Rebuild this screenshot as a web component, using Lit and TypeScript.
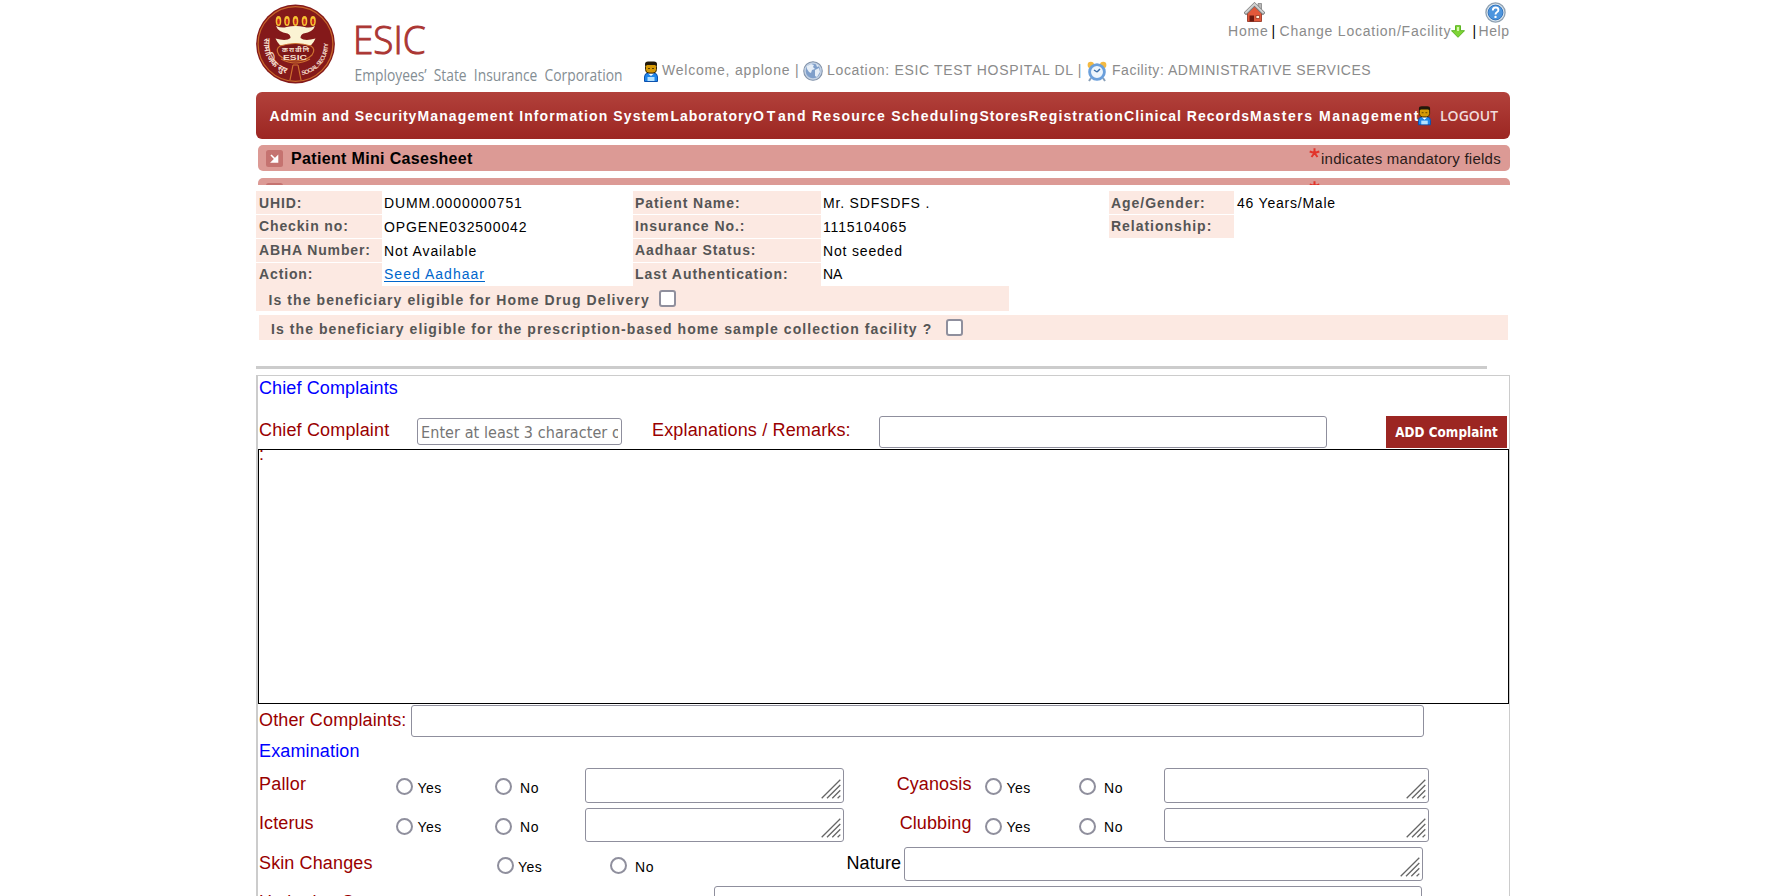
import { LitElement, html, svg, css } from "lit";
import { customElement } from "lit/decorators.js";

/* Text run with its own tracking, in pixels. */
const run = (text: string, tracking: number, cls = "") =>
  html`<span class="run ${cls}" style="letter-spacing:${tracking}px">${text}</span>`;

/* Menu entries: width in pixels, then text pieces with their tracking. */
const MENU: [number, [string, number][]][] = [
  [148, [["Admin and Security", 0.9]]],
  [253, [["Management Information System", 1.11]]],
  [82.5, [["Laboratory", 0.94]]],
  [226.5, [["OT", 2.8], ["and Resource Scheduling", 1.28]]],
  [49, [["Stores", 0.9]]],
  [95.5, [["Registration", 1.15]]],
  [126, [["Clinical Records", 1.02]]],
  [168, [["Masters Management", 1.53]]],
];

const PATIENT: [string, string, string, string, string?, string?][] = [
  ["UHID:", "DUMM.0000000751", "Patient Name:", "Mr. SDFSDFS .", "Age/Gender:", "46 Years/Male"],
  ["Checkin no:", "OPGENE032500042", "Insurance No.:", "1115104065", "Relationship:", ""],
  ["ABHA Number:", "Not Available", "Aadhaar Status:", "Not seeded"],
  ["Action:", "Seed Aadhaar", "Last Authentication:", "NA"],
];

const userIcon = () => html`<svg class="user" width="14" height="21" viewBox="0 0 14 21">
  <path d="M.5 20.500V16Q.5 12 4.500 12h5q4 0 4 4v4.500z" fill="#1f86ea" stroke="#0b50ad"/>
  <path d="M4 12.500l3 2.500 3-2.500" fill="#fff"/>
  <path d="M3.500 16h7v4h-7z" fill="#b4e2ff"/>
  <rect x="1.500" y="2" width="11" height="10" rx="3.500" fill="#d79a08" stroke="#3b2a06"/>
  <path d="M1 5V3Q1 .500 4 .500h6q3 0 3 2.500v2l-2-1H3z" fill="#21180a"/>
  <path d="M4 7.500h2M8 7.500h2" stroke="#5b4004"/></svg>`;

const globeIcon = () => html`<svg class="globe" width="20" height="20" viewBox="0 0 20 20">
  <circle cx="10" cy="10" r="9.200" fill="#7f9fca" stroke="#8493a8" stroke-width="1.200"/>
  <circle cx="10" cy="10" r="8" fill="none" stroke="#c4d2e4" stroke-width="1.400"/>
  <path d="M4 5l4-2 3 1-1 2 2 2-3 1-1 3-2-1-2-3zM12 9l4-2 1 4-3 5-2-1zM13 3l3 2-2 1z" fill="#e6eef7"/></svg>`;

const clockIcon = () => html`<svg class="clock" width="20" height="21" viewBox="0 0 20 21">
  <circle cx="3.800" cy="4" r="3.200" fill="#f3b942"/><circle cx="16.200" cy="4" r="3.200" fill="#f3b942"/>
  <path d="M4 17l-2 3M16 17l2 3" stroke="#8aa0b8" stroke-width="2"/>
  <circle cx="10" cy="11" r="7.400" fill="#edf5fc" stroke="#6a9fdb" stroke-width="2.800"/>
  <path d="M10 11l3-3M10 11l-3-2" stroke="#3b6ea8" stroke-width="1.500"/></svg>`;

const homeIcon = () => html`<svg class="home" width="21" height="21" viewBox="0 0 21 21">
  <path d="M14 1.500h3.500v6H14z" fill="#b9b9b9" stroke="#777" stroke-width=".7"/>
  <path d="M3.500 10l7-6.500 7 6.500v9.500h-14z" fill="#e2583a" stroke="#8e2b18" stroke-width=".8"/>
  <path d="M.8 12L10.500 2.500l9.700 9.500" fill="none" stroke="#777" stroke-width="3.600"/>
  <path d="M1.300 11.200L10.500 2.200l9.200 9" fill="none" stroke="#d0d0d0" stroke-width="2"/>
  <path d="M5.500 13.500H10v6H5.500z" fill="#6b1a10"/><path d="M12 13.500h3.500v3H12z" fill="#fff0d8" stroke="#8e2b18" stroke-width=".7"/></svg>`;

const helpIcon = () => html`<svg class="help" width="21" height="21" viewBox="0 0 21 21">
  <circle cx="10.500" cy="10.500" r="9.600" fill="#dce6ee" stroke="#8fa1b2" stroke-width="1.300"/>
  <circle cx="10.500" cy="10.500" r="7.400" fill="#4d95de" stroke="#3375be"/>
  <path d="M7.800 8.500q0-3 2.800-3t2.800 2.400q0 1.500-1.500 2.300-1.400.8-1.400 2.300" fill="none" stroke="#fff" stroke-width="1.900"/>
  <circle cx="10.500" cy="14.900" r="1.200" fill="#fff"/></svg>`;

const downIcon = () => html`<svg class="down" width="14" height="13" viewBox="0 0 14 13">
  <path d="M4.500.700h5v5h4L7 12.300.500 5.700h4z" fill="#7fd436" stroke="#5cb524"/><path d="M6 2h2v4H6z" fill="#d5f7ab"/></svg>`;

const brand = () => html`<svg class="brand" width="380" height="90" viewBox="0 0 380 90">
  <circle cx="39.500" cy="44" r="39.400" fill="#84191a"/>
  <circle cx="39.500" cy="44" r="37.400" fill="none" stroke="#c8672a" stroke-width="1.200"/>
  ${[22.5, 31, 39.5, 48.5, 57].map((x) => svg`<ellipse cx=${x} cy="21" rx="2.800" ry="5" fill="#f6c232"/><ellipse cx=${x} cy="21.500" rx="1.300" ry="3" fill="#c9281c"/>`)}
  <path d="M20 26q6 2.500 10.500 1 9-2 18 0 5 1.500 10.500-1-2 6-11.500 7.500-3 1-3 4.500 4 3.500 15 .500-4 9-10 9h-20q-6 0-10-9 11 3 15-.500 0-3.500-3-4.500Q22 32 20 26z" fill="#fbf3d3"/>
  <path d="M24 46q15.500-5 31 0 5 3 1 9-6 6-16.500 6T23 55q-4-6 1-9z" fill="#7d1717" stroke="#cf7230" stroke-width="1.200"/>
  <path d="M25 59q14.500 8 29 0M37 65L34 80M42 65L45 80M37 65h5" fill="none" stroke="#cf7230" stroke-width="1.200"/>
  <text x="26" y="51.500" class="seal" font-size="7" font-weight="bold" textLength="27">क रा बी नि</text>
  <text x="27" y="59.500" class="seal" font-weight="bold" font-size="7.500" textLength="24" lengthAdjust="spacingAndGlyphs">ESIC</text>
  <path id="arcL" d="M8.500 38A31 31 0 0 0 34 74.500" fill="none"/>
  <path id="arcR" d="M46 75A31 31 0 0 0 71 36" fill="none"/>
  <text class="seal" font-size="8.500" font-weight="bold"><textPath href="#arcL">सामाजिक सुरक्षा</textPath></text>
  <text class="seal" font-size="6" font-weight="bold"><textPath href="#arcR" textLength="45">SOCIAL SECURITY</textPath></text>
  <text x="97" y="53.500" class="name" font-size="38" textLength="72.500" lengthAdjust="spacingAndGlyphs">ESIC</text>
  <text x="98.500" y="80.500" class="sub" font-size="15.500" textLength="268" lengthAdjust="spacingAndGlyphs">Employees’&#160; State&#160; Insurance&#160; Corporation</text></svg>`;

const chip = () => html`<svg class="chip" width="17" height="17" viewBox="0 0 17 17"><rect width="17" height="17" rx="2.500" fill="#c57370"/>
  <path d="M5 5l5 5M11.500 6.500v5.500H6z" fill="#fff" stroke="#fff" stroke-width="1.600"/></svg>`;

const star = () => html`<svg class="star" width="11" height="10" viewBox="0 0 11 10">
  <path d="M5.500 5V.200M5.500 5L.700 3.500M5.500 5l4.800-1.500M5.500 5L2.500 9M5.500 5l3 4" stroke="#e2332a" stroke-width="2"/></svg>`;

const titleBar = () => html`<div class="bar">
  ${chip()}${run("Patient Mini Casesheet", 0.34, "bar-title")}${star()}${run("indicates mandatory fields", 0.25, "bar-note")}</div>`;

const foldedBar = () => html`<div class="bar folded">${chip()}<span class="bar-title"></span>${star()}<span class="bar-note"></span></div>`;

const area = (cls: string) => html`<div class="area ${cls}"><svg width="20" height="20" viewBox="0 0 20 20">
  <path d="M.700 19.300L19.300.700M6 19.300L19.300 6M11.300 19.300l8-8M16.600 19.300l2.700-2.700" stroke="#666" stroke-width="1.300" fill="none"/></svg></div>`;

const yesNo = (name: string) => html`
  <label class="opt yes"><input type="radio" name=${name} />${run("Yes", 0.5)}</label>
  <label class="opt no"><input type="radio" name=${name} />${run("No", 0.7)}</label>`;

@customElement("app-root")
export class AppRoot extends LitElement {
  static styles = css`
    :host { display: block; height: 896px; overflow: hidden; background: #fff; font: 14px "Liberation Sans", Arial, sans-serif; color: #000; }
    * { box-sizing: border-box; }
    svg { display: block; flex: none; }
    .page { width: 1254px; margin-left: 256px; }
    .run { white-space: pre; }
    header { display: flex; height: 92px; }
    .seal { fill: #f4dccb; font-family: "Liberation Sans", "Noto Sans", sans-serif; }
    .name { fill: #ab3633; font-family: "Open Sans", sans-serif; font-weight: 300; stroke: #ab3633; stroke-width: 1px; }
    .sub { fill: #838d93; font-family: "Open Sans", sans-serif; }
    .info { flex: 1; margin-left: 9px; color: #8b8b8b; }
    .links { display: grid; grid-template-columns: 43.500px 8px 193px 6px 31.500px; justify-content: end; align-items: end; height: 39px; line-height: 16px; }
    .links .col { display: flex; flex-direction: column; }
    .links .mix { display: flex; align-items: center; }
    .sep { color: #000; }
    .home { margin-left: 16px; }
    .help { margin: 0 0 0 6.500px; }
    .who { display: flex; margin-top: 22px; height: 20px; line-height: 18px; }
    .who .run { display: block; }
    .who .w1 { width: 141px; margin-left: 3px; }
    .who .w2 { width: 260px; margin-left: 5px; }
    .who .w3 { margin-left: 5px; }
    .who .user { margin-left: -1px; margin-right: 1px; }
    .who .globe { margin-left: 0; margin-right: -1px; }
    nav { display: flex; height: 47px; border-radius: 6px; padding-left: 13.500px; background: linear-gradient(#b2413b, #9c2622); color: #fff; font-weight: bold; line-height: 48px; }
    nav .item { flex: none; }
    nav .user { margin: 13px 9px 0 0; width: 13px; }
    .logout { font: 600 14px/47px "Open Sans", sans-serif; color: #f1dcdc; }
    .bar { display: flex; align-items: flex-start; height: 26px; margin: 6px 0 0 1.500px; padding: 0 9px 0 8.500px; border-radius: 5px; background: #dc9a95; line-height: 27px; }
    .chip { margin: 5px 8px 0 0; }
    .bar-title { font-size: 16px; font-weight: bold; flex: 1; }
    .bar-note { font-size: 15px; color: #2a1a19; width: 180px; }
    .star { margin: 3px 1px 0 0; }
    .clip { height: 14px; overflow: hidden; padding-top: 1px; }
    .folded { height: 12px; border-radius: 5px 5px 0 0; }
    .patient { display: grid; grid-template-columns: 126px 251px 188px 288px 125px 276px; grid-auto-rows: 24px; margin-top: 6px; line-height: 24px; }
    .lab { height: 23px; line-height: 23px; padding-left: 2px; background: #fce9e2; color: #555; font-weight: bold; }
    .lab.lead { padding-left: 3px; }
    .lab.top { line-height: 24px; }
    .lab.up { line-height: 22px; }
    .val.up { line-height: 23px; }
    .val { padding-left: 2px; }
    .val.last { padding-left: 3px; }
    .link { color: #0066cc; text-decoration: underline; text-underline-offset: 2px; }
    .ask { display: flex; height: 25px; background: #fce9e2; color: #555; font-weight: bold; line-height: 28px; }
    .a1 { width: 753px; padding-left: 12.500px; margin-top: -1px; }
    .a2 { width: 1249px; margin: 4px 0 0 3px; padding-left: 12px; }
    .a1 .run { width: 390.500px; }
    .a2 .run { width: 675px; }
    input[type="checkbox"], input[type="radio"] { appearance: none; flex: none; width: 17px; height: 17px; margin: 0; border: 2px solid #8f8f9d; background: #fff; }
    input[type="checkbox"] { border-radius: 3px; margin-top: 4px; }
    input[type="radio"] { border-radius: 50%; margin-top: 10px; }
    hr { width: 1231px; height: 3px; border: 0; background: #ccc; margin: 26px 0 6px; }
    .panel { border: solid #ccc; border-width: 1px 1px 0 2px; height: 560px; font-size: 18px; }
    h3 { margin: 0; padding-left: 1px; font: 18px/24px "Liberation Sans", Arial, sans-serif; color: #0000ff; }
    .red { color: #900; flex: none; }
    .row { display: flex; align-items: flex-start; padding-left: 1px; }
    .field { display: block; border: 1px solid #8f8f9d; border-radius: 3px; background: #fff; padding: 0 3px; height: 32px; flex: none; margin: 0; font: 16px "DejaVu Sans Condensed", "Noto Sans", sans-serif; }
    .field::placeholder { color: #757575; opacity: 1; }
    .complaint { margin-top: 16px; height: 33px; line-height: 28px; }
    .complaint .c1 { width: 158px; }
    .complaint .c2 { width: 227px; margin-left: 30px; }
    .f1 { width: 205px; height: 27px; margin-top: 2px; letter-spacing: .08px; padding-top: 2px; }
    .f2 { width: 448px; }
    button { width: 121px; height: 32px; margin: 0 0 0 59px; padding: 0; border: 0; background: #9c2622; color: #fff; font: bold 13.33px "DejaVu Sans Condensed", "Noto Sans", sans-serif; letter-spacing: .05px; }
    .list { height: 255px; border: 1px solid #000; color: #900; line-height: 8px; }
    .other { height: 34px; line-height: 32px; }
    .other .run { width: 152px; }
    .other .field { width: 1013px; margin-top: 1px; }
    .exam { line-height: 26px; height: 30px; }
    .sign { height: 40px; line-height: 32px; }
    .sign.alt { height: 39px; line-height: 30px; }
    .sign .first { width: 137px; }
    .opt { display: flex; width: 99px; flex: none; font-size: 14px; line-height: 40px; }
    .alt .opt { line-height: 39px; }
    .yes .run { margin-left: 4.500px; }
    .no .run { margin-left: 8px; }
    .sign .no { width: 90px; }
    .sign .second { width: 141px; text-align: right; padding-right: 13.500px; }
    .second ~ .yes { width: 94px; }
    .second ~ .no { width: 85px; }
    .area { position: relative; flex: none; height: 34px; border: 1px solid #8f8f9d; border-radius: 3px; }
    .area svg { position: absolute; right: 2px; bottom: 3px; }
    .tall { height: 35px; }
    .t1 { width: 259px; }
    .t2 { width: 265px; }
    .skin { height: 39px; line-height: 32px; }
    .skin .first { width: 237.500px; }
    .skin .yes { width: 113.500px; }
    .skin .no { width: 236.500px; }
    .skin .nature { width: 57px; }
    .t3 { width: 519px; }
    .hyd { line-height: 32px; }
    .hyd .run { width: 455px; }
    .hyd .field { width: 708px; }
  `;

  render() {
    return html`<div class="page">
      <header>
        ${brand()}
        <div class="info">
          <div class="links">
            <div class="col">${homeIcon()}${run("Home", 0.8)}</div>
            <span class="sep">|</span>
            <div class="mix">${run("Change Location/Facility", 0.77)}${downIcon()}</div>
            <span class="sep">|</span>
            <div class="col">${helpIcon()}${run("Help", 0.6)}</div>
          </div>
          <div class="who">
            ${userIcon()}${run("Welcome, applone |", 0.79, "w1")}
            ${globeIcon()}${run("Location: ESIC TEST HOSPITAL DL |", 0.67, "w2")}
            ${clockIcon()}${run("Facility: ADMINISTRATIVE SERVICES", 0.54, "w3")}
          </div>
        </div>
      </header>
      <nav>
        ${MENU.map(([w, parts]) => html`<span class="item" style="width:${w}px">${parts.map(([t, s]) => run(t, s))}</span>`)}
        ${userIcon()}<span class="logout">LOGOUT</span>
      </nav>
      ${titleBar()}
      <div class="clip">${foldedBar()}</div>
      <div class="patient">
        ${PATIENT.map(([a, b, c, d, e, f], i) => {
          const shift = i === 0 ? "top" : i % 2 === 1 ? "up" : "";
          const valShift = i === 3 ? "up" : "";
          return html`
          <div class="lab lead ${shift}">${run(a, 0.87)}</div>
          <div class="val ${valShift}">${run(b, i === 3 ? 1.02 : 0.9, i === 3 ? "link" : "")}</div>
          <div class="lab ${shift}">${run(c, 0.94)}</div>
          <div class="val ${valShift}">${run(d, i === 3 ? 0 : 0.82)}</div>
          ${e ? html`<div class="lab ${shift}">${run(e, 0.97)}</div>` : html`<div></div>`}
          <div class="val last">${run(f ?? "", 0.78)}</div>`;
        })}
      </div>
      <div class="ask a1">${run("Is the beneficiary eligible for Home Drug Delivery", 1.09)}<input type="checkbox" /></div>
      <div class="ask a2">${run("Is the beneficiary eligible for the prescription-based home sample collection facility ?", 1.07)}<input type="checkbox" /></div>
      <hr />
      <div class="panel">
        <h3>${run("Chief Complaints", 0.12)}</h3>
        <div class="row complaint">
          ${run("Chief Complaint", 0.15, "red c1")}
          <input class="field f1" placeholder="Enter at least 3 character of complaint" />
          ${run("Explanations / Remarks:", 0.16, "red c2")}
          <input class="field f2" />
          <button>ADD Complaint</button>
        </div>
        <div class="list">:</div>
        <div class="row other">${run("Other Complaints:", 0.14, "red")}<input class="field" /></div>
        <h3 class="exam">${run("Examination", 0.14)}</h3>
        <div class="row sign">
          ${run("Pallor", 0.2, "red first")}${yesNo("pallor")}${area("t1 tall")}
          ${run("Cyanosis", 0.1, "red second")}${yesNo("cyanosis")}${area("t2 tall")}
        </div>
        <div class="row sign alt">
          ${run("Icterus", 0.1, "red first")}${yesNo("icterus")}${area("t1")}
          ${run("Clubbing", 0.1, "red second")}${yesNo("clubbing")}${area("t2")}
        </div>
        <div class="row skin">
          ${run("Skin Changes", 0.12, "red first")}${yesNo("skin")}
          ${run("Nature", 0.1, "nature")}${area("t3")}
        </div>
        <div class="row hyd">${run("Hydration Status", 0.1, "red")}<input class="field" /></div>
      </div>
    </div>`;
  }
}
